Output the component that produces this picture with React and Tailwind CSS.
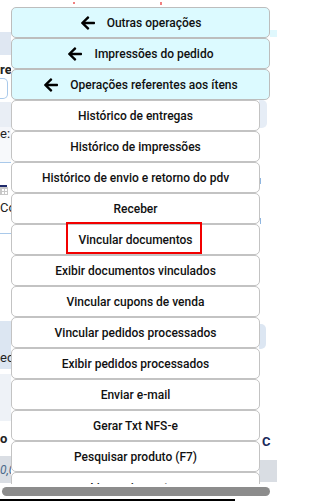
import React from "react";
import { FaArrowLeft } from "react-icons/fa";

const blueItems = ["Outras operações", "Impressões do pedido", "Operações referentes aos ítens"];
const whiteItems = [
  "Histórico de entregas",
  "Histórico de impressões",
  "Histórico de envio e retorno do pdv",
  "Receber",
  "Vincular documentos",
  "Exibir documentos vinculados",
  "Vincular cupons de venda",
  "Vincular pedidos processados",
  "Exibir pedidos processados",
  "Enviar e-mail",
  "Gerar Txt NFS-e",
  "Pesquisar produto (F7)",
  "Limpar impostos",
];

function LeftColumn() {
  return (
    <div className="flex w-[11px] flex-col overflow-hidden text-[13px] leading-none text-[#222]">
      <div className="h-[32px]" />
      <div className="h-[23px] bg-[#dfe7f2]" />
      <div className="h-[8px]" />
      <div className="flex h-[13px] items-end whitespace-nowrap font-bold">re</div>
      <div className="h-[2px]" />
      <div className="h-[21px] w-[8px] rounded-r-[5px] border border-l-0 border-[#a9c9ea]" />
      <div className="h-[3px]" />
      <div className="h-[25px] bg-[#e9eef5]" />
      <div className="flex h-[12px] items-center whitespace-nowrap bg-[#f4f6fa]">e:</div>
      <div className="h-[23px] bg-[#f7f9fb]" />
      <div className="h-[1px] bg-[#a9c9ea]" />
      <div className="h-[22px]" />
      <div className="h-[2px] w-[7px] bg-[#1f2a6b]" />
      <div className="h-[8px] w-[8px] border border-[#c8c8c8] bg-[linear-gradient(#c8c8c8_1px,transparent_1px),linear-gradient(90deg,#c8c8c8_1px,transparent_1px)] bg-[size:3px_3px]" />
      <div className="h-[5px]" />
      <div className="flex h-[14px] items-center whitespace-nowrap">Có</div>
      <div className="h-[19px]" />
      <div className="h-[1px] bg-[#a9c9ea]" />
      <div className="h-[87px]" />
      <div className="h-[25px] bg-[#dce6f2]" />
      <div className="flex h-[23px] items-center whitespace-nowrap bg-[#dce6f2]">ec</div>
      <div className="h-[5px]" />
      <div className="h-[47px] bg-[#eef2f7]" />
      <div className="h-[10px]" />
      <div className="flex h-[14px] items-center whitespace-nowrap font-bold">o</div>
      <div className="h-[11px]" />
      <div className="flex h-[27px] items-center whitespace-nowrap bg-[#dadee4] text-[12px] italic text-[#4a6a8a]">0,0</div>
    </div>
  );
}

function RightColumn() {
  return (
    <div className="flex w-[18px] flex-col overflow-hidden text-[13px] leading-none">
      <div className="h-[30px]" />
      <div className="ml-[11px] h-[7px] bg-[#e0f8fd]" />
      <div className="h-[63px]" />
      <div className="h-[28px] w-[8px] rounded-r-[5px] bg-[#e6edf6]" />
      <div className="h-[50px]" />
      <div className="ml-[1px] h-[6px] w-[1px] bg-[#8fb6e0]" />
      <div className="h-[34px]" />
      <div className="ml-[1px] h-[6px] w-[1px] bg-[#8fb6e0]" />
      <div className="h-[100px]" />
      <div className="h-[25px] w-[7px] rounded-r-[5px] bg-[#dce6f2]" />
      <div className="h-[85px]" />
      <div className="flex h-[14px] items-center pl-[3px] font-bold text-[#1a2a5a]">C</div>
      <div className="h-[12px]" />
      <div className="h-[22px] bg-[#d9dde3]" />
    </div>
  );
}

function MenuButton({ label, blue, arrow, highlight }) {
  return (
    <div
      className={`relative flex h-[31px] shrink-0 items-center justify-center gap-[11px] rounded-[5px] border ${
        blue ? "w-[259px] border-[#bdbdbd] bg-[#dcfaff]" : "w-[249px] border-[#c3c3c3] bg-white"
      }`}
    >
      {arrow && <FaArrowLeft className="h-[16px] w-[16px] shrink-0 text-black" />}
      <span className="whitespace-nowrap text-[12px] font-medium text-[#111]">{label}</span>
      {highlight && (
        <div className="pointer-events-none absolute left-[54px] top-[-3px] h-[32px] w-[136px] border-2 border-[#f20000]" />
      )}
    </div>
  );
}

export default function App() {
  return (
    <div
      className="relative h-[504px] w-[277px] overflow-hidden bg-white"
      style={{ fontFamily: "Roboto, 'Liberation Sans', sans-serif" }}
    >
      <div className="flex h-[484px] justify-between">
        <LeftColumn />
        <RightColumn />
      </div>
      <div className="relative z-10 flex h-[20px] flex-col bg-white">
        <div className="h-[3px]" />
        <div className="ml-[2px] h-[9px] w-[268px] rounded-full bg-[#8c8c8c]" />
        <div className="h-[3px]" />
        <div className="h-[2px] w-[235px] bg-black" />
      </div>

      <div className="absolute left-[11px] top-[7px] flex flex-col">
        {blueItems.map((l) => (
          <MenuButton key={l} label={l} blue arrow />
        ))}
        {whiteItems.map((l) => (
          <MenuButton key={l} label={l} highlight={l === "Vincular documentos"} />
        ))}
      </div>
      <div className="absolute left-[73px] top-[2px] h-[2px] w-[2px] bg-[#f08080]" />
      <div className="absolute left-[160px] top-[2px] h-[3px] w-[2px] bg-[#f08080]" />
    </div>
  );
}
